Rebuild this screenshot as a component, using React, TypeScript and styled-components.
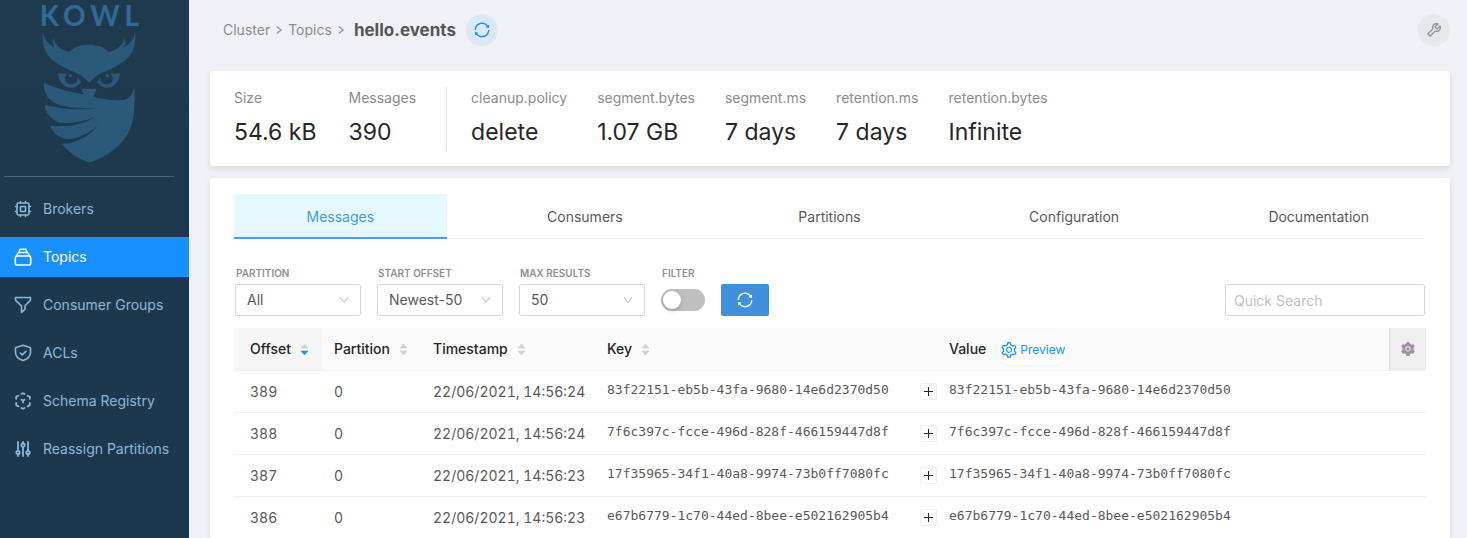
import React from "react";
import styled, { createGlobalStyle, css } from "styled-components";
import {
  AiFillSetting,
  AiOutlineDown,
  AiOutlinePlus,
  AiOutlineRight,
  AiOutlineSetting,
  AiOutlineSync,
  AiOutlineTool,
} from "react-icons/ai";

const GlobalStyle = createGlobalStyle`
  *, *::before, *::after { box-sizing: border-box; }
  body {
    margin: 0;
    background: #f0f1f6;
    color: #595959;
    font-family: Inter, "Liberation Sans", sans-serif;
    font-size: 14px;
    line-height: 22px;
  }
  button, input, select { font: inherit; color: inherit; }
  button { cursor: pointer; }
`;

const Shell = styled.div`
  display: flex;
  height: 100vh;
`;

/* ---------- Sidebar ---------- */

const Sidebar = styled.aside`
  flex: none;
  width: 189px;
  background: linear-gradient(180deg, #1f3a4e 0%, #1b374e 100%);
`;

const Brand = styled.a`
  display: flex;
  flex-direction: column;
  align-items: center;
  height: 177px;
  margin: 0 15px 12px 4px;
  border-bottom: 1px solid #4c6272;
  color: #306a95;
  text-decoration: none;
`;

const Wordmark = styled.span`
  padding-left: 6px;
  font-family: Lato, sans-serif;
  font-size: 28px;
  font-weight: 700;
  line-height: 30px;
  letter-spacing: 5px;
`;

const Nav = styled.nav`
  display: flex;
  flex-direction: column;
  gap: 8px;
`;

const NavLink = styled.a<{ $active?: boolean }>`
  display: flex;
  align-items: center;
  gap: 11px;
  height: 40px;
  padding-left: 14px;
  color: ${(p) => (p.$active ? "#fff" : "#8cb8da")};
  background: ${(p) => (p.$active ? "#1890ff" : "transparent")};
  text-decoration: none;

  svg {
    flex: none;
    width: 18px;
    height: 18px;
  }
`;

/* ---------- Main column ---------- */

const Main = styled.main`
  display: flex;
  flex: 1;
  flex-direction: column;
  min-width: 0;
  padding: 14px 17px 0 21px;
  overflow-y: auto;
  scrollbar-width: none;
`;

const TopBar = styled.header`
  display: flex;
  flex: none;
  align-items: center;
  justify-content: space-between;
  margin-bottom: 25px;
  padding-left: 13px;
`;

const Breadcrumb = styled.nav`
  display: flex;
  align-items: center;
  color: #8c8c8c;

  a {
    color: inherit;
    text-decoration: none;
  }
  > svg {
    width: 10px;
    height: 10px;
    margin: 0 4px;
    stroke-width: 50;
    stroke: currentColor;
  }
`;

const Title = styled.h1`
  margin: 0 10px 0 4px;
  color: #545557;
  font-size: 17px;
  font-weight: 700;
`;

const RoundButton = styled.button<{ $tone: "blue" | "grey" }>`
  display: grid;
  place-items: center;
  width: 32px;
  height: 32px;
  padding: 0;
  border: 0;
  border-radius: 50%;
  font-size: 18px;
  ${(p) =>
    p.$tone === "blue"
      ? css`
          background: #dce8f8;
          color: #1890ff;
        `
      : css`
          background: #e7e8eb;
          color: #8e8e90;
        `}
`;

const Card = styled.section<{ $grow?: boolean }>`
  flex: ${(p) => (p.$grow ? "1 0 auto" : "none")};
  margin-bottom: ${(p) => (p.$grow ? 0 : "12px")};
  padding: 16px 24px ${(p) => (p.$grow ? 0 : "15px")};
  border-radius: 3px;
  background: #fff;
  box-shadow: 0 3px 6px rgba(0, 0, 0, 0.09);
`;

const StatGroups = styled.div`
  display: flex;
`;

const StatGroup = styled.dl`
  display: flex;
  gap: 30px;
  margin: 0;

  &:first-child {
    gap: 32px;
  }
  & + & {
    margin-left: 30px;
    padding-left: 24px;
    border-left: 1px solid #e5e5e5;
  }
`;

const Stat = styled.div`
  dt {
    margin-bottom: 4px;
    color: #8c8c8c;
  }
  dd {
    margin: 0;
    color: #262626;
    font-size: 23px;
    line-height: 38px;
  }
`;

/* ---------- Tabs ---------- */

const TabBar = styled.div`
  display: grid;
  grid-template-columns: repeat(5, 1fr);
  gap: 32px;
  height: 45px;
  margin-right: 1px;
  border-bottom: 1px solid #f0f0f0;
`;

const Tab = styled.button<{ $active?: boolean }>`
  height: 45px;
  padding: 2px 0 0;
  border: 0;
  border-bottom: 2px solid ${(p) => (p.$active ? "#4a9fe8" : "transparent")};
  background: ${(p) => (p.$active ? "#e6f8ff" : "transparent")};
  color: ${(p) => (p.$active ? "#3e9ceb" : "#595959")};
`;

/* ---------- Filters ---------- */

const Filters = styled.form`
  display: flex;
  align-items: flex-end;
  gap: 16px;
  margin: 25px 1px 12px;
`;

const Field = styled.div`
  display: flex;
  flex-direction: column;
  gap: 2px;
`;

const FieldLabel = styled.label`
  padding-left: 1px;
  color: #8f8f8f;
  font-size: 10px;
  font-weight: 600;
  line-height: 18px;
  text-transform: uppercase;
`;

const SelectBox = styled.div`
  display: grid;
  align-items: center;
  width: 126px;

  > * {
    grid-area: 1 / 1;
  }
  > svg {
    justify-self: end;
    width: 12px;
    height: 12px;
    margin-right: 11px;
    color: #bfbfbf;
    pointer-events: none;
  }
`;

const Select = styled.select`
  appearance: none;
  width: 100%;
  height: 32px;
  padding: 0 30px 0 11px;
  border: 1px solid #d9d9d9;
  border-radius: 2px;
  background: #fff;
`;

const SwitchBox = styled.div`
  display: flex;
  align-items: center;
  height: 32px;
`;

const Switch = styled.input`
  appearance: none;
  display: flex;
  width: 44px;
  height: 22px;
  margin: 0;
  padding: 2px;
  border-radius: 11px;
  background: #bfbfbf;

  &::before {
    content: "";
    width: 18px;
    height: 18px;
    border-radius: 50%;
    background: #fff;
    box-shadow: 0 2px 4px rgba(0, 35, 11, 0.2);
  }
  &:checked {
    justify-content: flex-end;
    background: #1890ff;
  }
`;

const PrimaryButton = styled.button`
  display: grid;
  place-items: center;
  width: 48px;
  height: 32px;
  padding: 0;
  border: 0;
  border-radius: 2px;
  background: #408fda;
  color: #fff;
  font-size: 18px;
`;

const Search = styled.input`
  width: 200px;
  height: 32px;
  margin-left: auto;
  padding: 0 8px;
  border: 1px solid #d9d9d9;
  border-radius: 2px;

  &::placeholder {
    color: #bfbfbf;
  }
`;

/* ---------- Table ---------- */

const Table = styled.table`
  width: 100%;
  border-collapse: separate;
  border-spacing: 0;
  table-layout: fixed;
  font-variant-numeric: tabular-nums;
`;

const HeadCell = styled.th<{ $sorted?: boolean }>`
  height: 43px;
  padding: 0 0 0 12px;
  border-bottom: 1px solid #f0f0f0;
  background: ${(p) => (p.$sorted ? "#f5f5f5" : "#fafafa")};
  color: #262626;
  font-weight: 500;
  text-align: left;
  white-space: nowrap;

  &:first-child {
    padding-left: 16px;
  }
`;

const HeadContent = styled.div`
  display: flex;
  align-items: center;
  gap: 9px;
`;

const SettingsCell = styled(HeadCell)`
  padding: 0;
  border-left: 1px solid #dcdcdc;
  background: #efefef;
`;

const IconButton = styled.button`
  display: grid;
  place-items: center;
  width: 100%;
  height: 42px;
  padding: 0;
  border: 0;
  background: none;
  color: #9d8fa0;
  font-size: 16px;
`;

const PreviewButton = styled.button`
  display: flex;
  align-items: center;
  gap: 2px;
  height: 32px;
  padding: 2px 5px 0;
  border: 0;
  border-radius: 16px;
  background: #fbfbfb;
  box-shadow: 0 1px 1px rgba(0, 0, 0, 0.03);
  color: #1890ff;
  font-size: 12px;
  font-weight: 400;

  svg {
    width: 18px;
    height: 18px;
  }
`;

const Cell = styled.td`
  height: 42px;
  padding: 0 0 0 12px;
  border-bottom: 1px solid #f0f0f0;
  white-space: nowrap;

  &:first-child {
    padding-left: 16px;
  }
`;

const MonoCell = styled(Cell)`
  padding-bottom: 4px;
  font-family: "DejaVu Sans Mono", monospace;
  font-size: 13px;
`;

const ExpandButton = styled.button`
  display: grid;
  place-items: center;
  width: 17px;
  height: 17px;
  padding: 0;
  border: 1px solid #f0f0f0;
  border-radius: 2px;
  background: #fff;
  color: #262626;

  &::before,
  &::after {
    content: "";
    grid-area: 1 / 1;
    width: 9px;
    height: 1px;
    background: currentColor;
  }
  &::after {
    width: 1px;
    height: 9px;
  }
`;

/* ---------- Drawings ---------- */

const OwlLogo = () => (
  <svg width="100" height="133" viewBox="117 90 300 399" fill="#2b597a" aria-hidden="true">
    <path d="M129 96C133 118 145 134 164 143C157 133 157 125 160 115C166 136 184 152 208 156C222 140 242 134 267 134C292 134 311 140 326 156C350 152 368 136 374 115C377 125 377 133 370 143C389 134 401 118 405 96C407 124 404 148 390 166C368 194 330 208 305 219C290 226 277 238 268 249C258 238 244 226 229 219C204 208 166 194 144 166C130 148 127 124 129 96Z" />
    <path d="M174 219C184 222 192 222 203 220C191 231 193 251 212 253C228 253 236 242 231 230C236 236 240 241 244 245C234 259 220 266 204 262C188 258 176 243 174 219Z" />
    <circle cx="211" cy="227" r="5" />
    <path d="M360 219C350 222 342 222 331 220C343 231 341 251 322 253C306 253 298 242 303 230C298 236 296 241 291 245C301 259 314 266 330 262C346 258 358 243 360 219Z" />
    <circle cx="322" cy="227" r="5" />
    <path d="M131 248C165 264 210 276 250 283L244 266H290L280 290C310 298 345 303 370 300C390 296 399 280 403 258C405 320 405 370 378 410C350 452 300 478 268 487C235 478 205 455 184 431C218 434 262 414 293 378C262 400 232 420 200 417C175 412 156 397 151 377C200 383 250 373 286 351C250 365 215 371 185 369C155 362 136 340 134 314C180 327 230 331 280 326C230 323 200 322 175 314C143 301 130 277 131 248Z" />
  </svg>
);

const strokeProps = {
  viewBox: "0 0 18 18",
  fill: "none",
  stroke: "currentColor",
  strokeWidth: 1.6,
  strokeLinecap: "round" as const,
  strokeLinejoin: "round" as const,
  "aria-hidden": true,
};

const CpuIcon = () => (
  <svg {...strokeProps}>
    <rect x="3" y="3" width="12" height="12" rx="1.5" />
    <rect x="6.5" y="6.5" width="5" height="5" rx=".5" />
    <path d="M6.5 1.5V3M11.5 1.5V3M6.5 15v1.5M11.5 15v1.5M1.5 6.5H3M1.5 11.5H3M15 6.5h1.5M15 11.5h1.5" />
  </svg>
);

const StackIcon = () => (
  <svg {...strokeProps}>
    <path d="M3 8h12a1.8 1.8 0 0 1 1.7 1.8v5.4a1.8 1.8 0 0 1-1.8 1.8H3.1a1.8 1.8 0 0 1-1.8-1.8V9.8A1.8 1.8 0 0 1 3 8Z" />
    <path d="M2.5 8 4 5.2Q4.4 4.5 5.2 4.5h7.6q.8 0 1.200.7L15.5 8M5 4.5 5.7 2q.2-.8 1-.8h4.6q.8 0 1 .8l.7 2.500" />
  </svg>
);

const FunnelIcon = () => (
  <svg {...strokeProps}>
    <path d="M1.5 1.5h15v2q0 .6-.4 1.100L11 9.800v3.400l-3.500 3.300V9.800L1.900 4.600q-.4-.5-.4-1.100Z" />
  </svg>
);

const ShieldIcon = () => (
  <svg {...strokeProps}>
    <path d="M9 1.300 16 3.500q.5.200.5.700v4.300c0 4-3.300 6.700-7.500 8-4.200-1.300-7.500-4-7.500-8V4.200q0-.5.500-.7Z" />
    <path d="m6.300 9 2 1.900 3.600-3.500" />
  </svg>
);

const SchemaIcon = () => (
  <svg {...strokeProps} strokeWidth={1.8}>
    <path d="m7.500 1.900 1.500-.7 1.500.7M13.600 3.700l2.200 1.100v2M15.800 11v2.200l-2.200 1.200M10.500 16 9 16.800 7.500 16M4.400 14.400l-2.200-1.200V11M2.200 6.800v-2l2.200-1.100" />
    <path d="m7.500 7.700 1.500.9 1.500-.9M9 8.600v2" />
  </svg>
);

const SlidersIcon = () => (
  <svg {...strokeProps} strokeWidth={1.8}>
    <path d="M4 2v8.500M4 14.500V16M9 7.500V16M9 1.800v1.500M14 2v8.500M14 14.500V16" />
    <circle cx="4" cy="12.500" r="1.700" />
    <circle cx="9" cy="5.200" r="1.700" />
    <circle cx="14" cy="12.500" r="1.700" />
  </svg>
);

const SorterIcon = ({ down }: { down?: boolean }) => (
  <svg width="9" height="13" viewBox="0 0 9 13" aria-hidden="true">
    <path d="M4.500 1 8 5H1Z" fill="#d0d0d0" stroke="#d0d0d0" strokeWidth=".6" strokeLinejoin="round" />
    <path d="M4.500 12 8 8H1Z" fill={down ? "#1890ff" : "#d0d0d0"} stroke={down ? "#1890ff" : "#d0d0d0"} strokeWidth=".6" strokeLinejoin="round" />
  </svg>
);

/* ---------- Data ---------- */

const navItems = [
  { label: "Brokers", icon: <CpuIcon /> },
  { label: "Topics", icon: <StackIcon />, active: true },
  { label: "Consumer Groups", icon: <FunnelIcon /> },
  { label: "ACLs", icon: <ShieldIcon /> },
  { label: "Schema Registry", icon: <SchemaIcon /> },
  { label: "Reassign Partitions", icon: <SlidersIcon /> },
];

const statGroups = [
  [
    ["Size", "54.6 kB"],
    ["Messages", "390"],
  ],
  [
    ["cleanup.policy", "delete"],
    ["segment.bytes", "1.07 GB"],
    ["segment.ms", "7 days"],
    ["retention.ms", "7 days"],
    ["retention.bytes", "Infinite"],
  ],
];

const tabs = ["Messages", "Consumers", "Partitions", "Configuration", "Documentation"];

const selects = [
  { id: "partition", label: "Partition", options: ["All", "0"] },
  { id: "start-offset", label: "Start Offset", options: ["Newest-50", "Newest", "Oldest"] },
  { id: "max-results", label: "Max Results", options: ["50", "100", "200"] },
];

const columnWidths = ["88px", "99px", "174px", "313px", "29px", "auto", "37px"];

const messages = [
  { offset: 389, time: "22/06/2021, 14:56:24", id: "83f22151-eb5b-43fa-9680-14e6d2370d50" },
  { offset: 388, time: "22/06/2021, 14:56:24", id: "7f6c397c-fcce-496d-828f-466159447d8f" },
  { offset: 387, time: "22/06/2021, 14:56:23", id: "17f35965-34f1-40a8-9974-73b0ff7080fc" },
  { offset: 386, time: "22/06/2021, 14:56:23", id: "e67b6779-1c70-44ed-8bee-e502162905b4" },
];

export default function App() {
  return (
    <>
      <GlobalStyle />
      <Shell>
        <Sidebar>
          <Brand href="#">
            <Wordmark>KOWL</Wordmark>
            <OwlLogo />
          </Brand>
          <Nav aria-label="Main">
            {navItems.map((item) => (
              <NavLink key={item.label} href="#" $active={item.active}>
                {item.icon}
                {item.label}
              </NavLink>
            ))}
          </Nav>
        </Sidebar>

        <Main>
          <TopBar>
            <Breadcrumb aria-label="Breadcrumb">
              <a href="#">Cluster</a>
              <AiOutlineRight />
              <a href="#">Topics</a>
              <AiOutlineRight />
              <Title>hello.events</Title>
              <RoundButton $tone="blue" aria-label="Refresh">
                <AiOutlineSync />
              </RoundButton>
            </Breadcrumb>
            <RoundButton $tone="grey" aria-label="Tools">
              <AiOutlineTool />
            </RoundButton>
          </TopBar>

          <Card>
            <StatGroups>
              {statGroups.map((group, i) => (
                <StatGroup key={i}>
                  {group.map(([label, value]) => (
                    <Stat key={label}>
                      <dt>{label}</dt>
                      <dd>{value}</dd>
                    </Stat>
                  ))}
                </StatGroup>
              ))}
            </StatGroups>
          </Card>

          <Card $grow>
            <TabBar role="tablist">
              {tabs.map((tab, i) => (
                <Tab key={tab} role="tab" aria-selected={i === 0} $active={i === 0}>
                  {tab}
                </Tab>
              ))}
            </TabBar>

            <Filters onSubmit={(e) => e.preventDefault()}>
              {selects.map((s) => (
                <Field key={s.id}>
                  <FieldLabel htmlFor={s.id}>{s.label}</FieldLabel>
                  <SelectBox>
                    <Select id={s.id}>
                      {s.options.map((o) => (
                        <option key={o}>{o}</option>
                      ))}
                    </Select>
                    <AiOutlineDown />
                  </SelectBox>
                </Field>
              ))}
              <Field>
                <FieldLabel htmlFor="filter">Filter</FieldLabel>
                <SwitchBox>
                  <Switch id="filter" type="checkbox" role="switch" />
                </SwitchBox>
              </Field>
              <PrimaryButton type="submit" aria-label="Reload messages">
                <AiOutlineSync />
              </PrimaryButton>
              <Search type="text" placeholder="Quick Search" aria-label="Quick Search" />
            </Filters>

            <Table>
              <colgroup>
                {columnWidths.map((width, i) => (
                  <col key={i} style={{ width }} />
                ))}
              </colgroup>
              <thead>
                <tr>
                  <HeadCell $sorted aria-sort="descending">
                    <HeadContent>
                      Offset <SorterIcon down />
                    </HeadContent>
                  </HeadCell>
                  {["Partition", "Timestamp", "Key"].map((name) => (
                    <HeadCell key={name}>
                      <HeadContent>
                        {name} <SorterIcon />
                      </HeadContent>
                    </HeadCell>
                  ))}
                  <HeadCell />
                  <HeadCell>
                    <HeadContent>
                      Value
                      <PreviewButton>
                        <AiOutlineSetting />
                        Preview
                      </PreviewButton>
                    </HeadContent>
                  </HeadCell>
                  <SettingsCell>
                    <IconButton aria-label="Column settings">
                      <AiFillSetting />
                    </IconButton>
                  </SettingsCell>
                </tr>
              </thead>
              <tbody>
                {messages.map((m) => (
                  <tr key={m.offset}>
                    <Cell>{m.offset}</Cell>
                    <Cell>0</Cell>
                    <Cell>{m.time}</Cell>
                    <MonoCell>{m.id}</MonoCell>
                    <Cell>
                      <ExpandButton aria-label="Expand row" />
                    </Cell>
                    <MonoCell>{m.id}</MonoCell>
                    <Cell />
                  </tr>
                ))}
              </tbody>
            </Table>
          </Card>
        </Main>
      </Shell>
    </>
  );
}
